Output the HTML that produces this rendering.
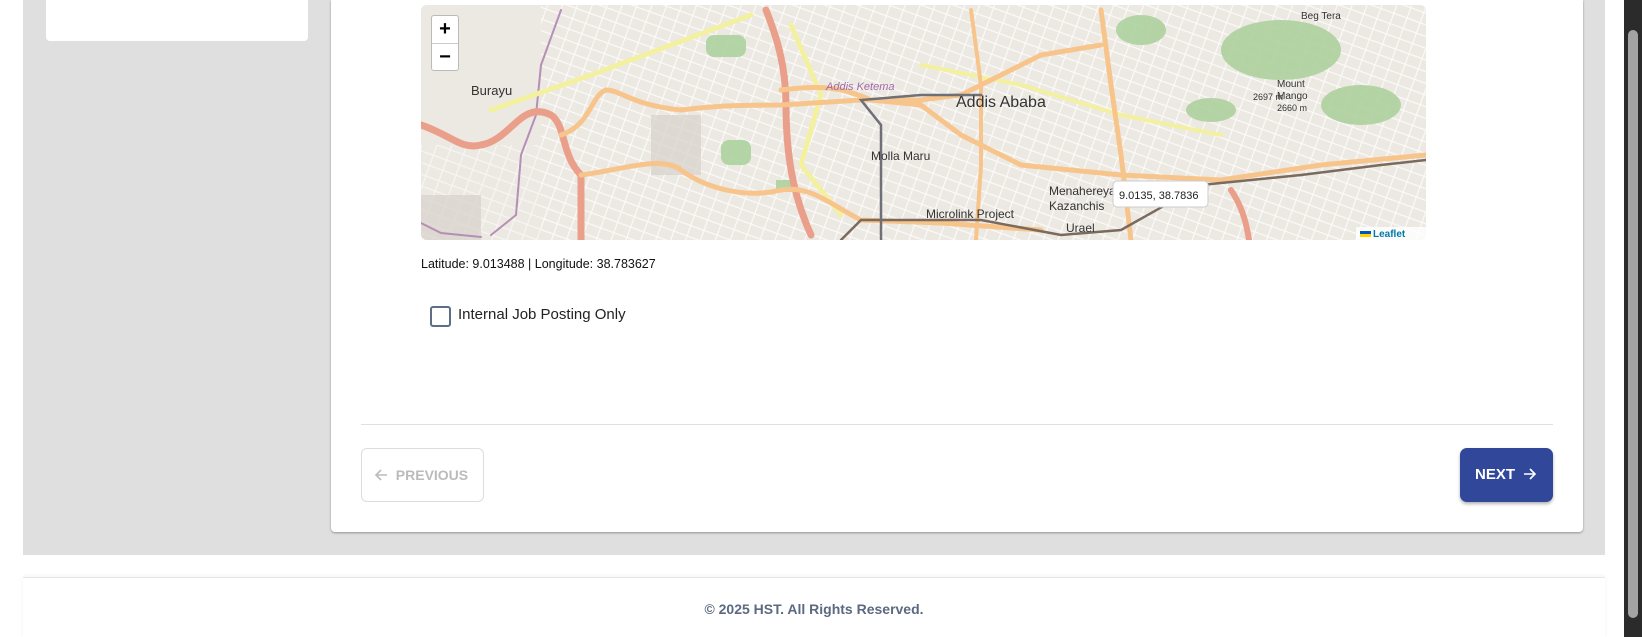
<!DOCTYPE html>
<html><head><meta charset="utf-8"><style>
*{margin:0;padding:0;box-sizing:border-box}
body{width:1642px;height:637px;overflow:hidden;background:#fff;font-family:"Liberation Sans",Arial,sans-serif;position:relative}
.gray{position:absolute;left:23px;top:0;width:1582px;height:555px;background:#dfdfdf}
.side{position:absolute;left:46px;top:0;width:262px;height:41px;background:#fff;border-radius:0 0 4px 4px}
.card{position:absolute;left:331px;top:0;width:1252px;height:532px;background:#fff;border-radius:0 0 4px 4px;box-shadow:0 1px 2px rgba(0,0,0,.35)}
.map{position:absolute;left:421px;top:5px;width:1005px;height:235px;border-radius:6px;overflow:hidden;background:#efeae3}
.zoom{position:absolute;left:10px;top:10px;width:28px;height:56px;background:#fff;border:1px solid #bbb;border-radius:3px;font-size:20px;font-weight:bold;text-align:center;line-height:27px}
.zoom div:first-child{border-bottom:1px solid #ccc}
.lat{position:absolute;left:421px;top:257px;font-size:12.5px;color:#111}
.cb{position:absolute;left:430px;top:306px;width:21px;height:21px;border:2px solid #5f6e85;border-radius:3px}
.cbl{position:absolute;left:458px;top:306px;font-size:15px;color:#222}
.div{position:absolute;left:361px;top:424px;width:1192px;height:1px;background:#e0e0e0}
.prev{position:absolute;left:361px;top:448px;width:123px;height:54px;border:1px solid #ddd;border-radius:6px;color:#bbb;font-weight:bold;font-size:14px;line-height:52px;padding-left:12px}
.next{position:absolute;left:1460px;top:448px;width:93px;height:54px;background:#30479a;border-radius:7px;color:#fff;font-weight:bold;font-size:15px;line-height:54px;padding-left:15px;box-shadow:0 2px 3px rgba(0,0,0,.3)}
.prev svg,.next svg{vertical-align:middle;margin-top:-3px}
.foot{position:absolute;left:23px;top:577px;width:1582px;height:60px;background:#fff;border-top:1px solid #e6e6e6;box-shadow:0 -1px 4px rgba(0,0,0,.05);text-align:center;padding-top:23px;font-weight:bold;font-size:14px;color:#5b6a80}
.sb{position:absolute;left:1624px;top:0;width:18px;height:637px;background:#2b2b2b}
.th{position:absolute;left:1628px;top:30px;width:10px;height:588px;background:#a3a3a3;border-radius:5px}
</style></head><body>
<div class="gray"></div>
<div class="side"></div>
<div class="card"></div>
<div class="map">
<svg width="1005" height="235" viewBox="0 0 1005 235" style="position:absolute;left:0;top:0">
<defs><pattern id="st" width="14" height="11" patternUnits="userSpaceOnUse" patternTransform="rotate(20)"><path d="M0 5H14M7 0V11" stroke="#fff" stroke-width="1.2"/></pattern></defs>
<rect width="1005" height="235" fill="#ece8e2"/>
<rect x="120" y="0" width="885" height="235" fill="url(#st)" opacity=".8"/>
<rect x="0" y="140" width="120" height="95" fill="url(#st)" opacity=".6"/>
<g fill="#add19e" opacity=".9">
<rect x="285" y="30" width="40" height="22" rx="8"/><rect x="300" y="135" width="30" height="25" rx="8"/>
<ellipse cx="860" cy="45" rx="60" ry="30"/><ellipse cx="940" cy="100" rx="40" ry="20"/><ellipse cx="720" cy="25" rx="25" ry="15"/>
<ellipse cx="790" cy="105" rx="25" ry="12"/><rect x="355" y="175" width="20" height="12"/>
</g>
<g fill="#d9d5ce" opacity=".8"><rect x="230" y="110" width="50" height="60"/><rect x="0" y="190" width="60" height="45"/></g>
<g fill="none" stroke-linecap="round">
<path d="M140 5 L120 60 L115 110 L100 150 L95 210 L70 230" stroke="#b58fb5" stroke-width="2"/>
<path d="M0 218 L20 228 L60 232" stroke="#b58fb5" stroke-width="2"/>
<path d="M70 105 L170 70 L330 10" stroke="#f3f1a0" stroke-width="5"/>
<path d="M370 20 L400 90 L380 160 L420 210" stroke="#f3f1a0" stroke-width="5"/>
<path d="M500 60 L600 80 L700 110 L800 130" stroke="#f3f1a0" stroke-width="4"/>
<path d="M0 120 C30 130 40 145 60 140 C90 135 100 95 130 110 C145 120 140 150 160 170 L160 235" stroke="#ea9f8b" stroke-width="7"/>
<path d="M345 5 C355 30 365 60 365 100 C365 150 372 190 390 230" stroke="#ea9f8b" stroke-width="7"/>
<path d="M810 185 C820 200 825 215 828 235" stroke="#ea9f8b" stroke-width="6"/>
<path d="M140 130 C170 120 170 90 185 85 C200 85 210 100 260 105 C300 100 330 100 360 100 L440 95 L500 95 L540 90 L580 70 L620 50 L680 40" stroke="#f7c58b" stroke-width="5"/>
<path d="M160 170 C200 165 240 150 260 165 C280 180 320 195 360 185 C390 180 410 200 440 215 L520 218 L620 225" stroke="#f7c58b" stroke-width="5"/>
<path d="M360 85 C400 80 420 82 450 95 L500 100 L540 130 L600 160 L700 170 L800 175 L900 160 L1005 150" stroke="#f7c58b" stroke-width="5"/>
<path d="M680 5 L690 80 L700 150 L710 235" stroke="#f7c58b" stroke-width="5"/>
<path d="M550 5 L560 80 L560 160 L555 235" stroke="#f7c58b" stroke-width="4"/>
<path d="M420 235 L440 215 L560 215 L640 230 L700 225 L780 180 L880 170 L960 160 L1005 155" stroke="#7b6a5e" stroke-width="2.5"/>
<path d="M460 235 L460 120 L440 95 L500 90 L560 90" stroke="#6f6f78" stroke-width="2.5"/>
</g>
<g font-family="Liberation Sans,Noto Sans CJK SC,sans-serif" fill="#333" font-size="12">
<text x="50" y="90" font-size="13">Burayu</text>
<text x="405" y="85" fill="#a269a8" font-style="italic" font-size="11">Addis Ketema</text>
<text x="535" y="102" font-size="16">Addis Ababa</text>
<text x="450" y="155">Molla Maru</text>
<text x="505" y="213">Microlink Project</text>
<text x="628" y="190">Menahereya</text>
<text x="628" y="205">Kazanchis</text>
<text x="645" y="227">Urael</text>
<text x="832" y="95" font-size="9">2697 m</text>
<text x="856" y="82" font-size="10">Mount</text>
<text x="856" y="94" font-size="10">Mango</text>
<text x="856" y="106" font-size="9">2660 m</text>
<text x="880" y="14" font-size="10">Beg Tera</text>
</g>
<rect x="692" y="176" width="95" height="26" rx="4" fill="#fff" stroke="#ccc"/>
<text x="698" y="194" font-family="Liberation Sans,sans-serif" font-size="11" fill="#222">9.0135, 38.7836</text>
<rect x="935" y="222" width="70" height="13" fill="#fff" opacity=".8"/>
<rect x="939" y="226" width="11" height="6" fill="#ffd500"/><rect x="939" y="226" width="11" height="3" fill="#0057b7"/>
<text x="952" y="232" font-family="Liberation Sans,sans-serif" font-size="10" fill="#0078a8" font-weight="bold">Leaflet</text>
</svg>
<div class="zoom"><div>+</div><div>−</div></div>
</div>
<div class="lat">Latitude: 9.013488 | Longitude: 38.783627</div>
<div class="cb"></div><div class="cbl">Internal Job Posting Only</div>
<div class="div"></div>
<div class="prev"><svg width="14" height="14" viewBox="0 0 14 14"><path d="M13 7H2M7 2L2 7L7 12" fill="none" stroke="#bbb" stroke-width="1.6"/></svg>&nbsp; PREVIOUS</div>
<div class="next">NEXT &nbsp;<svg width="14" height="14" viewBox="0 0 14 14"><path d="M1 7H12M7 2L12 7L7 12" fill="none" stroke="#fff" stroke-width="1.6"/></svg></div>
<div class="foot">© 2025 HST. All Rights Reserved.</div>
<div class="sb"></div><div class="th"></div>
</body></html>
